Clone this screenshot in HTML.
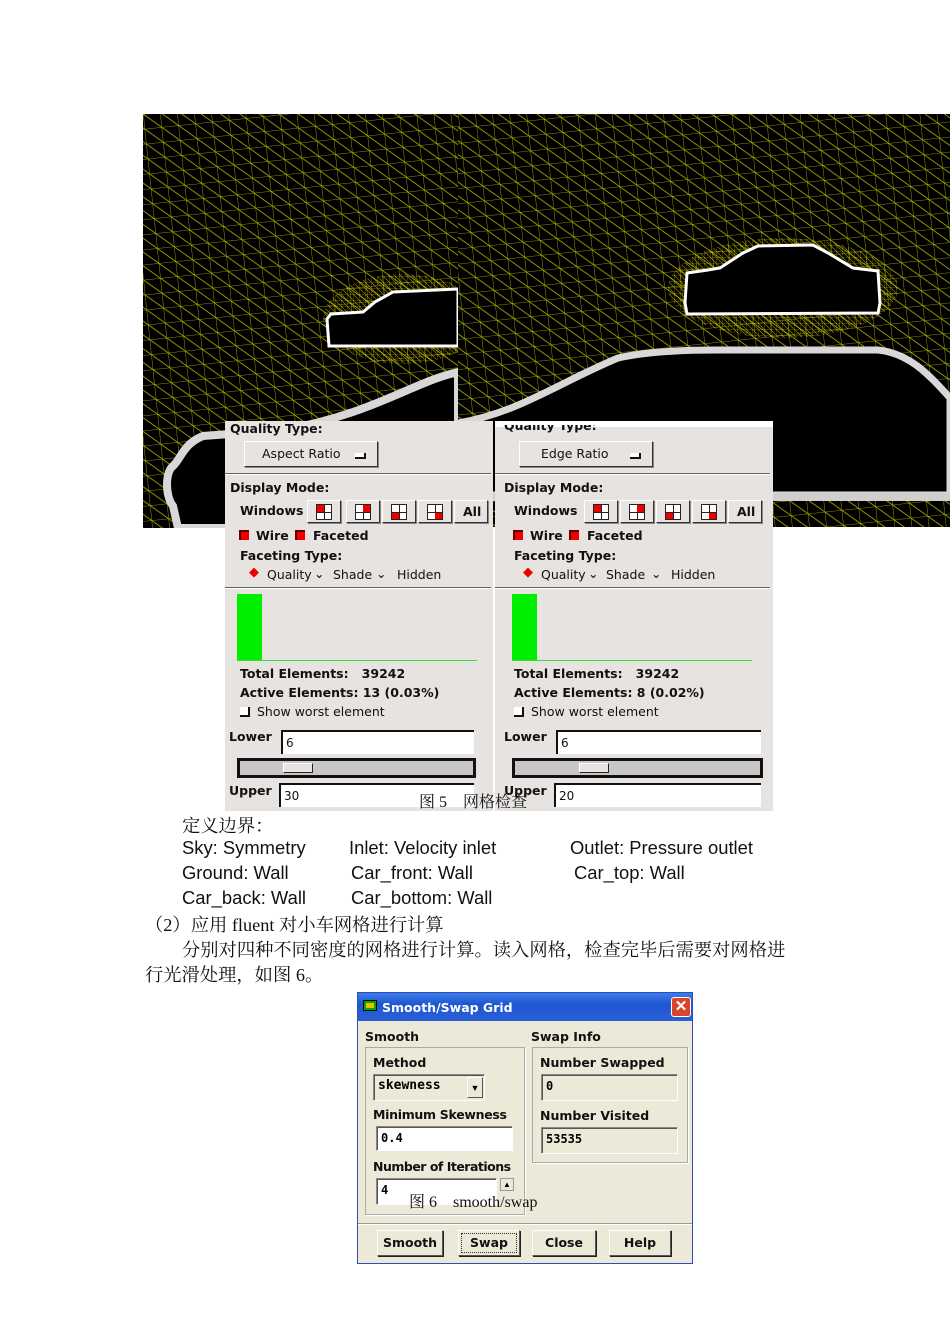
<!DOCTYPE html>
<html><head><meta charset="utf-8">
<style>
*{margin:0;padding:0;box-sizing:border-box}
body{width:950px;height:1344px;background:#fff;position:relative;overflow:hidden;font-family:"Liberation Sans",sans-serif}
.a{position:absolute}
.panel{position:absolute;top:421px;height:390px;background:#e6e3e1;font-family:"DejaVu Sans","Liberation Sans",sans-serif;color:#111}
.b{font-weight:bold;font-size:12.5px;position:absolute;white-space:nowrap}
.n{font-size:12.5px;position:absolute;white-space:nowrap}
.btn{position:absolute;background:#e6e3e1;border:1px solid;border-color:#fff #333 #333 #fff;box-shadow:1px 1px 0 #888}
.ico{position:absolute;left:8px;top:3px;width:16px;height:16px;border:1px solid #222;background:#fff}
.ico i{position:absolute;width:7px;height:7px;background:#e00}
.ico:before{content:"";position:absolute;left:7px;top:0;width:1px;height:14px;background:#222}
.ico:after{content:"";position:absolute;top:7px;left:0;height:1px;width:14px;background:#222}
.sep{position:absolute;height:2px;border-top:1px solid #666;border-bottom:1px solid #fff}
.chk{position:absolute;width:10px;height:10px;background:#e00;border-left:2px solid #600;border-top:2px solid #600}
.inp{position:absolute;background:#fff;border-top:2px solid #111;border-left:2px solid #111;font-size:12px;padding-left:3px;line-height:22px}
.cn{font-family:"Liberation Serif","Noto Serif CJK SC",serif;font-size:18.3px;position:absolute;white-space:nowrap;color:#111}
.en{font-family:"Liberation Sans",sans-serif;font-size:18.4px;position:absolute;white-space:nowrap;color:#111}
.xp{font-family:"DejaVu Sans","Liberation Sans",sans-serif;font-weight:bold;font-size:12.5px;position:absolute;white-space:nowrap;color:#111}
.xb{position:absolute;top:1230px;height:26px;background:#ece9d8;border:1px solid #333;border-color:#fff #555 #555 #fff;box-shadow:1px 1px 0 #222;text-align:center;line-height:24px}
.fld{position:absolute;border:1px solid;border-color:#888 #fff #fff #888;box-shadow:inset 1px 1px 0 #555;font-family:"DejaVu Sans Mono","Liberation Mono",monospace;font-weight:bold;font-size:12px;padding-left:4px;line-height:22px}
</style></head><body>

<svg class="a" style="left:143px;top:114px" width="315" height="414" viewBox="0 0 315 414">
<defs>
<pattern id="m" width="17" height="15" patternUnits="userSpaceOnUse" patternTransform="rotate(-6)">
<path d="M0 0H17M0 0V15M0 0L17 15" stroke="#bdb800" stroke-width="0.8" fill="none"/>
</pattern>
<pattern id="m2" width="6" height="6" patternUnits="userSpaceOnUse">
<path d="M0 0H6M0 0V6M0 0L6 6" stroke="#e8e000" stroke-width="0.7" fill="none"/>
</pattern>
</defs>
<rect width="315" height="414" fill="#000"/>
<rect width="315" height="414" fill="url(#m)"/>
<ellipse cx="260" cy="205" rx="80" ry="45" fill="url(#m2)" opacity="0.6"/>
<path d="M315,258 C270,268 230,300 140,316 L60,322 C40,330 38,345 30,352 C22,358 22,382 30,392 L35,414 L315,414 Z" fill="#000" stroke="#d8d8d8" stroke-width="8"/>
<path d="M184,205 L188,200 L220,198 L232,188 L250,178 L315,175 L315,232 L186,232 Z" fill="#000" stroke="#fff" stroke-width="3"/>
</svg>

<svg class="a" style="left:458px;top:113px" width="492" height="414" viewBox="0 0 492 414">
<rect width="492" height="414" fill="#000"/>
<rect width="492" height="414" fill="url(#m)"/>
<rect width="492" height="1" fill="#fff"/>
<ellipse cx="325" cy="175" rx="115" ry="50" fill="url(#m2)" opacity="0.6"/>
<path d="M0,310 C60,300 100,270 160,245 C190,238 230,237 260,237 L420,237 C450,240 470,260 492,285 L492,382 L0,382 Z" fill="#000" stroke="#d8d8d8" stroke-width="7"/>
<rect x="0" y="380" width="492" height="8" fill="#cfcfcf"/>
<path d="M229,160 L250,157 L262,155 L285,140 L300,133 L355,132 L370,140 L395,155 L420,158 L422,190 L420,200 L229,201 L227,190 Z" fill="#000" stroke="#fff" stroke-width="3"/>
</svg>

<!-- left panel -->
<div class="panel" style="left:225px;width:268px">
 <div class="b" style="left:5px;top:0">Quality Type:</div>
 <div class="btn" style="left:19px;top:20px;width:134px;height:26px"><span class="n" style="left:17px;top:4px">Aspect Ratio</span><span class="a" style="left:110px;top:11px;width:11px;height:6px;border-right:2px solid #111;border-bottom:2px solid #111;background:#fff"></span></div>
 <div class="sep" style="left:0;top:52px;width:266px"></div>
 <div class="b" style="left:5px;top:59px">Display Mode:</div>
 <div class="b" style="left:15px;top:82px">Windows</div>
 <div class="btn" style="left:82px;top:79px;width:34px;height:23px"><div class="ico"><i style="left:0;top:0"></i></div></div>
 <div class="btn" style="left:121px;top:79px;width:34px;height:23px"><div class="ico"><i style="left:7px;top:0"></i></div></div>
 <div class="btn" style="left:157px;top:79px;width:34px;height:23px"><div class="ico"><i style="left:0;top:7px"></i></div></div>
 <div class="btn" style="left:193px;top:79px;width:34px;height:23px"><div class="ico"><i style="left:7px;top:7px"></i></div></div>
 <div class="btn" style="left:229px;top:79px;width:34px;height:23px"><span class="b" style="left:8px;top:3px">All</span></div>
 <div class="chk" style="left:14px;top:109px"></div><div class="b" style="left:31px;top:107px">Wire</div>
 <div class="chk" style="left:70px;top:109px"></div><div class="b" style="left:88px;top:107px">Faceted</div>
 <div class="b" style="left:15px;top:127px">Faceting Type:</div>
 <div class="n" style="left:24px;top:144px;color:#e00;font-size:13px">◆</div><div class="n" style="left:42px;top:146px">Quality</div>
 <div class="n" style="left:89px;top:145px">⌄</div><div class="n" style="left:108px;top:146px">Shade</div>
 <div class="n" style="left:151px;top:145px">⌄</div><div class="n" style="left:172px;top:146px">Hidden</div>
 <div class="sep" style="left:0;top:166px;width:266px"></div>
 <div class="a" style="left:12px;top:173px;width:25px;height:67px;background:#0e0"></div>
 <div class="a" style="left:12px;top:239px;width:240px;height:1px;background:#3d3"></div>
 <div class="b" style="left:15px;top:245px">Total Elements:&nbsp;&nbsp;&nbsp;39242</div>
 <div class="b" style="left:15px;top:264px">Active Elements: 13 (0.03%)</div>
 <div class="a" style="left:15px;top:286px;width:10px;height:10px;border-right:2px solid #111;border-bottom:2px solid #111;background:#fff"></div><div class="n" style="left:32px;top:283px">Show worst element</div>
 <div class="b" style="left:4px;top:308px">Lower</div>
 <div class="inp" style="left:56px;top:309px;width:193px;height:24px">6</div>
 <div class="a" style="left:12px;top:337px;width:239px;height:20px;border:3px solid #111;background:#c8c6c6"><div class="a" style="left:43px;top:2px;width:30px;height:10px;border:1px solid;border-color:#fff #222 #222 #fff;background:#e6e3e1"></div></div>
 <div class="b" style="left:4px;top:362px">Upper</div>
 <div class="inp" style="left:54px;top:362px;width:195px;height:24px">30</div>
</div>

<!-- right panel -->
<div class="panel" style="left:495px;width:278px">
 <div class="a" style="left:0;top:0;width:278px;height:6px;background:#fff"></div>
 <div class="b" style="left:9px;top:-3px;clip-path:inset(7px 0 0 0)">Quality Type:</div>
 <div class="btn" style="left:24px;top:20px;width:134px;height:26px"><span class="n" style="left:21px;top:4px">Edge Ratio</span><span class="a" style="left:110px;top:11px;width:11px;height:6px;border-right:2px solid #111;border-bottom:2px solid #111;background:#fff"></span></div>
 <div class="sep" style="left:0;top:52px;width:275px"></div>
 <div class="b" style="left:9px;top:59px">Display Mode:</div>
 <div class="b" style="left:19px;top:82px">Windows</div>
 <div class="btn" style="left:89px;top:79px;width:34px;height:23px"><div class="ico"><i style="left:0;top:0"></i></div></div>
 <div class="btn" style="left:125px;top:79px;width:34px;height:23px"><div class="ico"><i style="left:7px;top:0"></i></div></div>
 <div class="btn" style="left:161px;top:79px;width:34px;height:23px"><div class="ico"><i style="left:0;top:7px"></i></div></div>
 <div class="btn" style="left:197px;top:79px;width:34px;height:23px"><div class="ico"><i style="left:7px;top:7px"></i></div></div>
 <div class="btn" style="left:233px;top:79px;width:34px;height:23px"><span class="b" style="left:8px;top:3px">All</span></div>
 <div class="chk" style="left:18px;top:109px"></div><div class="b" style="left:35px;top:107px">Wire</div>
 <div class="chk" style="left:74px;top:109px"></div><div class="b" style="left:92px;top:107px">Faceted</div>
 <div class="b" style="left:19px;top:127px">Faceting Type:</div>
 <div class="n" style="left:28px;top:144px;color:#e00;font-size:13px">◆</div><div class="n" style="left:46px;top:146px">Quality</div>
 <div class="n" style="left:93px;top:145px">⌄</div><div class="n" style="left:111px;top:146px">Shade</div>
 <div class="n" style="left:156px;top:145px">⌄</div><div class="n" style="left:176px;top:146px">Hidden</div>
 <div class="sep" style="left:0;top:166px;width:275px"></div>
 <div class="a" style="left:17px;top:173px;width:25px;height:67px;background:#0e0"></div>
 <div class="a" style="left:17px;top:239px;width:240px;height:1px;background:#3d3"></div>
 <div class="b" style="left:19px;top:245px">Total Elements:&nbsp;&nbsp;&nbsp;39242</div>
 <div class="b" style="left:19px;top:264px">Active Elements: 8 (0.02%)</div>
 <div class="a" style="left:19px;top:286px;width:10px;height:10px;border-right:2px solid #111;border-bottom:2px solid #111;background:#fff"></div><div class="n" style="left:36px;top:283px">Show worst element</div>
 <div class="b" style="left:9px;top:308px">Lower</div>
 <div class="inp" style="left:61px;top:309px;width:205px;height:24px">6</div>
 <div class="a" style="left:17px;top:337px;width:251px;height:20px;border:3px solid #111;background:#c8c6c6"><div class="a" style="left:64px;top:2px;width:30px;height:10px;border:1px solid;border-color:#fff #222 #222 #fff;background:#e6e3e1"></div></div>
 <div class="b" style="left:9px;top:362px">Upper</div>
 <div class="inp" style="left:59px;top:362px;width:207px;height:24px">20</div>
</div>
<div class="cn" style="left:419px;top:789px;font-size:16px">图 5&nbsp;&nbsp;&nbsp;&nbsp;网格检查</div>

<div class="cn" style="left:182px;top:812px">定义边界：</div>
<div class="en" style="left:182px;top:837px">Sky: Symmetry</div>
<div class="en" style="left:349px;top:837px">Inlet: Velocity inlet</div>
<div class="en" style="left:570px;top:837px">Outlet: Pressure outlet</div>
<div class="en" style="left:182px;top:862px">Ground: Wall</div>
<div class="en" style="left:351px;top:862px">Car_front: Wall</div>
<div class="en" style="left:574px;top:862px">Car_top: Wall</div>
<div class="en" style="left:182px;top:887px">Car_back: Wall</div>
<div class="en" style="left:351px;top:887px">Car_bottom: Wall</div>
<div class="cn" style="left:145px;top:911px">（2）应用 fluent 对小车网格进行计算</div>
<div class="cn" style="left:182px;top:936px">分别对四种不同密度的网格进行计算。读入网格，检查完毕后需要对网格进</div>
<div class="cn" style="left:145px;top:961px">行光滑处理，如图 6。</div>

<!-- dialog -->
<div class="a" style="left:357px;top:992px;width:336px;height:272px;background:#ece9d8;border:1px solid #2a4fb8">
 <div class="a" style="left:0;top:0;width:334px;height:28px;background:linear-gradient(#3c7ce8,#1e56d0 40%,#2a5fd6)"></div>
 <div class="a" style="left:5px;top:7px;width:14px;height:11px;background:#0a0;border:1px solid #000"><div class="a" style="left:2px;top:2px;width:8px;height:5px;background:#e8c000"></div></div>
 <div class="xp" style="left:24px;top:7px;color:#fff">Smooth/Swap Grid</div>
 <div class="a" style="left:313px;top:4px;width:20px;height:20px;background:#d8452a;border:1px solid #fff;border-radius:3px;color:#fff;font-weight:bold;text-align:center;line-height:18px;font-size:15px">✕</div>
 <div class="xp" style="left:7px;top:36px">Smooth</div>
 <div class="xp" style="left:173px;top:36px">Swap Info</div>
 <div class="a" style="left:7px;top:54px;width:160px;height:168px;border:1px solid #aaa;box-shadow:1px 1px 0 #fff"></div>
 <div class="a" style="left:174px;top:54px;width:156px;height:116px;border:1px solid #aaa;box-shadow:1px 1px 0 #fff"></div>
 <div class="xp" style="left:15px;top:62px">Method</div>
 <div class="fld" style="left:15px;top:81px;width:112px;height:27px;background:#ece9d8;font-size:13px">skewness</div>
 <div class="a" style="left:109px;top:84px;width:16px;height:21px;background:#ece9d8;border:1px solid;border-color:#fff #555 #555 #fff;font-size:9px;text-align:center;line-height:20px">▼</div>
 <div class="xp" style="left:15px;top:114px;letter-spacing:-0.3px">Minimum Skewness</div>
 <div class="fld" style="left:18px;top:133px;width:137px;height:25px;background:#fff">0.4</div>
 <div class="xp" style="left:15px;top:166px;letter-spacing:-0.5px">Number of Iterations</div>
 <div class="fld" style="left:18px;top:185px;width:121px;height:27px;background:#fff">4</div>
 <div class="a" style="left:142px;top:185px;width:14px;height:13px;background:#ece9d8;border:1px solid #999;font-size:8px;text-align:center;line-height:12px">▲</div>
 <div class="xp" style="left:182px;top:62px">Number Swapped</div>
 <div class="fld" style="left:183px;top:81px;width:137px;height:27px">0</div>
 <div class="xp" style="left:182px;top:115px">Number Visited</div>
 <div class="fld" style="left:183px;top:134px;width:137px;height:27px">53535</div>
 <div class="a" style="left:0;top:230px;width:334px;height:1px;background:#999"></div>
 <div class="a" style="left:0;top:231px;width:334px;height:1px;background:#fff"></div>
</div>
<div class="xb xp" style="left:377px;width:66px">Smooth</div>
<div class="xb xp" style="left:458px;width:62px;outline:1px dotted #333;outline-offset:-4px">Swap</div>
<div class="xb xp" style="left:532px;width:64px">Close</div>
<div class="xb xp" style="left:609px;width:62px">Help</div>
<div class="cn" style="left:409px;top:1189px;font-size:16px">图 6&nbsp;&nbsp;&nbsp;&nbsp;smooth/swap</div>

</body></html>
